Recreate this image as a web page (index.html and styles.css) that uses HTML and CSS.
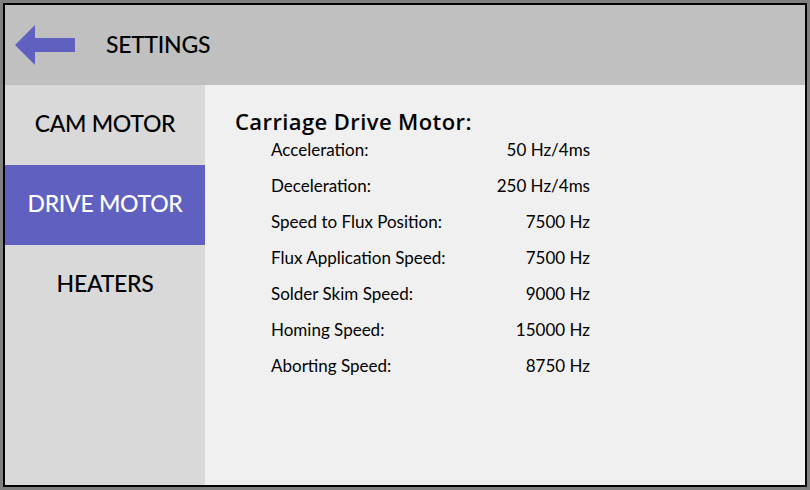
FILE: index.html
```html
<!DOCTYPE html>
<html>
<head>
<meta charset="utf-8">
<link rel="stylesheet" href="styles.css">
</head>
<body>
<div class="screen">
  <header class="topbar">
    <svg class="back" width="60" height="40" viewBox="0 0 60 40">
      <polygon points="0,20 20,0 20,13 60,13 60,27 20,27 20,40" fill="#6060c0"/>
    </svg>
    <span class="title">SETTINGS</span>
  </header>
  <div class="main">
    <nav class="sidebar">
      <div class="nav-item">CAM MOTOR</div>
      <div class="nav-item active">DRIVE MOTOR</div>
      <div class="nav-item">HEATERS</div>
    </nav>
    <section class="content">
      <h2 class="heading">Carriage Drive Motor:</h2>
      <div class="rows">
        <div class="row"><span>Acceleration:</span><span>50 Hz/4ms</span></div>
        <div class="row"><span>Deceleration:</span><span>250 Hz/4ms</span></div>
        <div class="row"><span>Speed to Flux Position:</span><span>7500 Hz</span></div>
        <div class="row"><span>Flux Application Speed:</span><span>7500 Hz</span></div>
        <div class="row"><span>Solder Skim Speed:</span><span>9000 Hz</span></div>
        <div class="row"><span>Homing Speed:</span><span>15000 Hz</span></div>
        <div class="row"><span>Aborting Speed:</span><span>8750 Hz</span></div>
      </div>
    </section>
  </div>
</div>
</body>
</html>
```
FILE: styles.css
```css
html, body {
  margin: 0;
  padding: 0;
}
body {
  background: #808080;
  padding: 3px;
  width: 804px;
  height: 484px;
  font-family: Lato, "Open Sans", sans-serif;
  color: #000;
}
.screen {
  border: 2px solid #000;
  width: 800px;
  height: 480px;
  display: flex;
  flex-direction: column;
  background: #f0f0f0;
}
.topbar {
  height: 80px;
  background: #c0c0c0;
  display: flex;
  align-items: center;
  flex: none;
}
.back {
  margin-left: 10px;
  display: block;
}
.title {
  margin-left: 31px;
  padding-bottom: 3px;
  font-size: 23px;
  font-weight: 500;
  letter-spacing: -0.3px;
}
.main {
  flex: 1;
  display: flex;
}
.sidebar {
  width: 200px;
  background: #d9d9d9;
  flex: none;
}
.nav-item {
  height: 80px;
  box-sizing: border-box;
  padding-bottom: 5px;
  display: flex;
  align-items: center;
  justify-content: center;
  font-size: 23px;
  font-weight: 500;
  letter-spacing: -0.3px;
}
.nav-item.active {
  background: #6060c0;
  color: #fff;
}
.content {
  flex: 1;
  padding: 22px 0 0 30px;
}
.heading {
  margin: 0;
  font-family: "Open Sans", sans-serif;
  font-weight: 600;
  font-size: 22px;
  line-height: 28px;
  letter-spacing: 0.4px;
}
.rows {
  width: 319px;
  margin-left: 36px;
  margin-top: -3px;
}
.row {
  display: flex;
  justify-content: space-between;
  font-size: 17px;
  line-height: 36px;
}
```
